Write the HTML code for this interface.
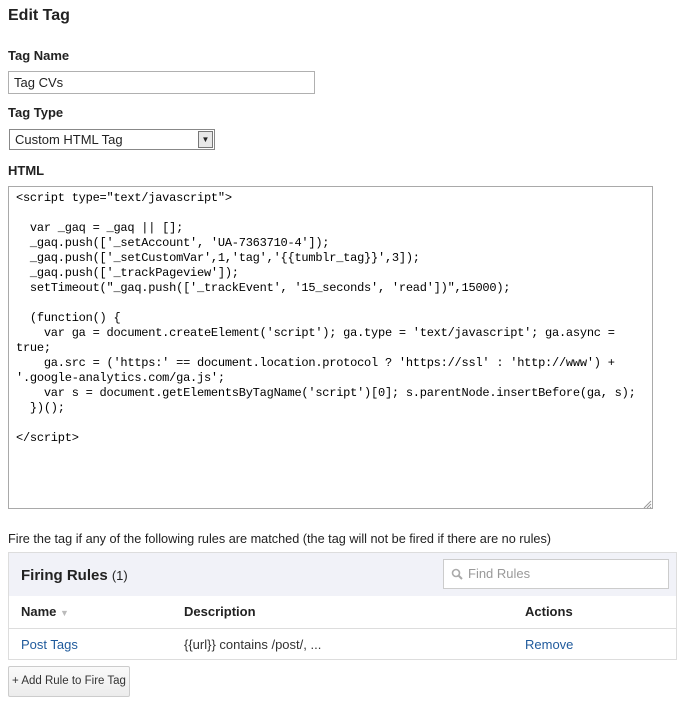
<!DOCTYPE html><html><head><style>
body{margin:0;background:#fff;font-family:"Liberation Sans",Arial,sans-serif;color:#222;width:678px;height:708px;position:relative;overflow:hidden}
.a{position:absolute}
h1{position:absolute;left:8px;top:7px;margin:0;font-size:16px;font-weight:bold}
.l{position:absolute;left:8px;font-size:13px;font-weight:bold}
pre{position:absolute;left:8px;top:186px;width:629px;height:309px;margin:0;border:1px solid #a9a9a9;padding:4px 7px 8px 7px;font-family:"Liberation Mono",monospace;font-size:12px;letter-spacing:-0.24px;line-height:15px;color:#000;overflow:hidden;white-space:pre}
</style></head><body>
<h1>Edit Tag</h1>
<div class="l" style="top:48px">Tag Name</div>
<div class="a" style="left:8px;top:71px;font-size:13px;line-height:21px;padding-left:5px;box-sizing:border-box;width:307px;height:23px;border:1px solid #b0b0b0">Tag CVs</div>
<div class="l" style="top:105px">Tag Type</div>
<div class="a" style="left:9px;top:129px;width:206px;height:21px;border:1px solid #888;box-sizing:border-box;font-size:13px;line-height:19px;padding-left:5px">Custom HTML Tag
<div class="a" style="right:1px;top:1px;width:15px;height:17px;background:#e8e8e8;border:1px solid #777;box-sizing:border-box;font-size:8px;line-height:15px;text-align:center">▼</div></div>
<div class="l" style="top:163px">HTML</div>
<pre>&lt;script type="text/javascript"&gt;

  var _gaq = _gaq || [];
  _gaq.push(['_setAccount', 'UA-7363710-4']);
  _gaq.push(['_setCustomVar',1,'tag','{{tumblr_tag}}',3]);
  _gaq.push(['_trackPageview']);
  setTimeout("_gaq.push(['_trackEvent', '15_seconds', 'read'])",15000);

  (function() {
    var ga = document.createElement('script'); ga.type = 'text/javascript'; ga.async =
true;
    ga.src = ('https:' == document.location.protocol ? 'https://ssl' : 'http://www') +
'.google-analytics.com/ga.js';
    var s = document.getElementsByTagName('script')[0]; s.parentNode.insertBefore(ga, s);
  })();

&lt;/script&gt;</pre>
<svg class="a" style="left:642px;top:499px" width="10" height="10"><path d="M9 2L2 9M9 5L5 9M9 8L8 9" stroke="#999"/></svg>
<div class="a" style="left:8px;top:532px;font-size:12.7px">Fire the tag if any of the following rules are matched (the tag will not be fired if there are no rules)</div>
<div class="a" style="left:8px;top:552px;width:669px;height:108px;border:1px solid #ddd;box-sizing:border-box">
<div class="a" style="left:0;top:0;width:667px;height:43px;background:#f1f2f8"></div>
<div class="a" style="left:12px;top:14px;font-size:15px;font-weight:bold;color:#222">Firing Rules <span style="font-weight:normal;font-size:13px">(1)</span></div>
<div class="a" style="left:434px;top:6px;width:226px;height:30px;background:#fff;border:1px solid #ccc;box-sizing:border-box;font-size:13px;color:#999;line-height:28px;padding-left:24px">Find Rules
<svg class="a" style="left:7px;top:8px" width="12" height="12" viewBox="0 0 12 12"><circle cx="5" cy="5" r="3.5" fill="none" stroke="#aaa" stroke-width="1.6"/><path d="M7.5 7.5L11 11" stroke="#aaa" stroke-width="2"/></svg></div>
<div class="a" style="left:0;top:43px;width:667px;height:32px;border-bottom:1px solid #ddd;font-size:13px;font-weight:bold">
<span class="a" style="left:12px;top:8px">Name <span style="color:#bbb;font-size:9px;font-weight:normal">▼</span></span>
<span class="a" style="left:175px;top:8px">Description</span>
<span class="a" style="left:516px;top:8px">Actions</span></div>
<div class="a" style="left:12px;top:84px;font-size:13px;color:#1f5a9c">Post Tags</div>
<div class="a" style="left:175px;top:84px;font-size:13px;color:#333">{{url}} contains /post/, ...</div>
<div class="a" style="left:516px;top:84px;font-size:13px;color:#1f5a9c">Remove</div>
</div>
<div class="a" style="left:8px;top:666px;width:122px;height:31px;border:1px solid #ccc;border-radius:2px;box-sizing:border-box;background:linear-gradient(#fafafa,#ececec);font-size:11.5px;line-height:29px;text-align:center;color:#333">+ Add Rule to Fire Tag</div>
</body></html>
